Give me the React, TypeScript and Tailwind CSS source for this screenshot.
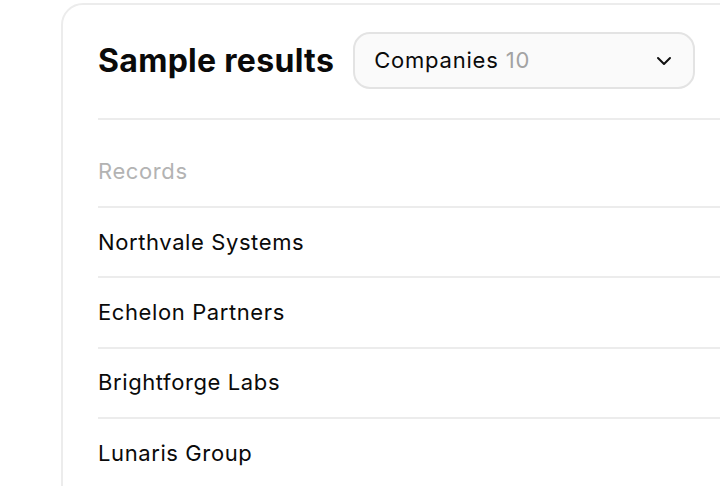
import { ChevronDown } from 'lucide-react';

const records = ['Northvale Systems', 'Echelon Partners', 'Brightforge Labs', 'Lunaris Group'];

export default function App(): React.ReactElement {
  return (
    <div className="h-[486px] w-[720px] overflow-hidden bg-white font-['Inter',sans-serif]">
      <div className="ml-[61px] mt-[3px] w-[720px] rounded-tl-[22px] border-2 border-[#ececec] pl-[35px] pt-[27px]">
        <div className="flex items-center gap-[19px] pb-[29px]">
          <h1 className="text-[32px] font-bold tracking-[0.3px] text-[#0a0a0a]">Sample results</h1>
          <button className="flex h-[57px] w-[342px] items-center justify-between rounded-[17px] border-2 border-[#e3e3e3] bg-[#fafafa] pl-[19px] pr-[17px]">
            <span className="text-[22px] tracking-[0.8px] text-[#0a0a0a]">
              Companies <span className="text-[#a3a3a3]">10</span>
            </span>
            <ChevronDown className="h-6 w-6 text-[#111]" strokeWidth={2} />
          </button>
        </div>
        <div className="border-t-2 border-[#ececec]">
          <div className="flex h-[86px] items-center pt-[17px] text-[22px] tracking-[0.6px] text-[#b3b3b3]">Records</div>
          {records.map((r) => (
            <div
              key={r}
              className="flex h-[70.4px] items-center border-t-2 border-[#ececec] text-[22px] tracking-[0.6px] text-[#0a0a0a]"
            >
              {r}
            </div>
          ))}
        </div>
      </div>
    </div>
  );
}
